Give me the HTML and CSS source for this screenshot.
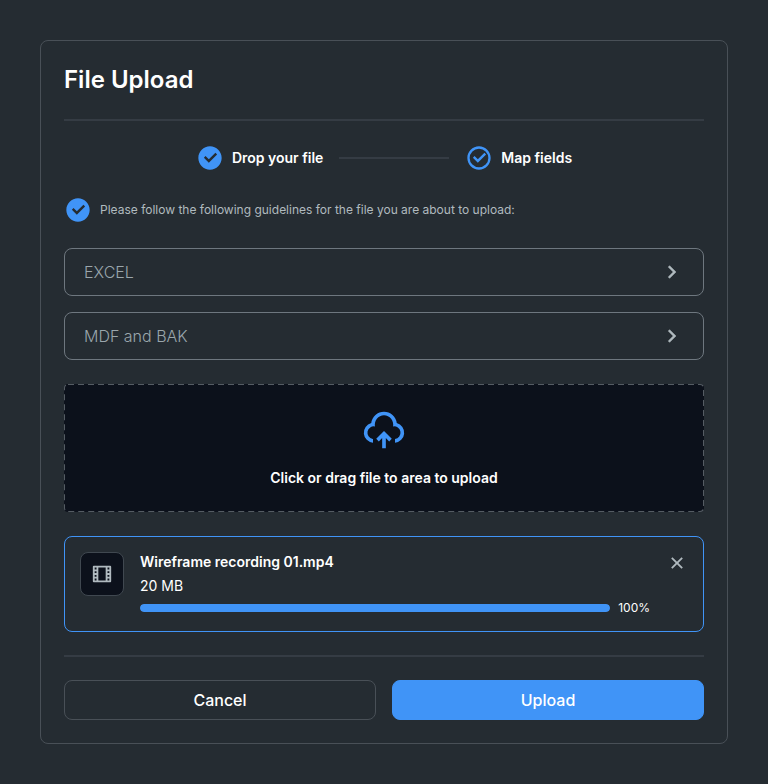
FILE: index.html
```html
<!DOCTYPE html>
<html lang="en">
<head>
<meta charset="utf-8">
<meta name="viewport" content="width=device-width, initial-scale=1">
<title>File Upload</title>
<link rel="stylesheet" href="styles.css">
</head>
<body>
<main class="card">
  <h1 class="title">File Upload</h1>
  <hr class="divider">
  <ol class="steps">
    <li class="step">
      <svg class="icon-check" viewBox="0 0 24 24" aria-hidden="true"><path d="M12 22C6.477 22 2 17.523 2 12S6.477 2 12 2s10 4.477 10 10-4.477 10-10 10zm-.997-6l7.07-7.071-1.414-1.414-5.656 5.657-2.829-2.829-1.414 1.414L11.003 16z"/></svg>
      <span>Drop your file</span>
    </li>
    <li class="step-line" aria-hidden="true"></li>
    <li class="step">
      <svg class="icon-check" viewBox="0 0 24 24" aria-hidden="true"><path d="M12 22C6.477 22 2 17.523 2 12S6.477 2 12 2s10 4.477 10 10-4.477 10-10 10zm0-2a8 8 0 1 0 0-16 8 8 0 0 0 0 16zm-.997-4L6.76 11.757l1.414-1.414 2.829 2.829 5.656-5.657 1.415 1.414L11.003 16z"/></svg>
      <span>Map fields</span>
    </li>
  </ol>
  <p class="note">
    <svg class="icon-check" viewBox="0 0 24 24" aria-hidden="true"><path d="M12 22C6.477 22 2 17.523 2 12S6.477 2 12 2s10 4.477 10 10-4.477 10-10 10zm-.997-6l7.07-7.071-1.414-1.414-5.656 5.657-2.829-2.829-1.414 1.414L11.003 16z"/></svg>
    <span>Please follow the following guidelines for the file you are about to upload:</span>
  </p>
  <div class="guides">
    <button class="guide" type="button">
      <span>EXCEL</span>
      <svg class="icon-chevron" viewBox="0 0 24 24" aria-hidden="true"><path d="M13.172 12l-4.95-4.95 1.414-1.414L16 12l-6.364 6.364-1.414-1.414z"/></svg>
    </button>
    <button class="guide" type="button">
      <span>MDF and BAK</span>
      <svg class="icon-chevron" viewBox="0 0 24 24" aria-hidden="true"><path d="M13.172 12l-4.95-4.95 1.414-1.414L16 12l-6.364 6.364-1.414-1.414z"/></svg>
    </button>
  </div>
  <label class="dropzone" for="file">
    <svg class="dropzone-outline" aria-hidden="true"><rect width="100%" height="100%" rx="4"/></svg>
    <svg class="icon-cloud" viewBox="0 0 24 24" aria-hidden="true"><path d="M12 12.586l4.243 4.242-1.415 1.415L13 16.415V22h-2v-5.587l-1.828 1.83-1.415-1.415L12 12.586zM12 2a7.001 7.001 0 0 1 6.954 6.194 5.5 5.5 0 0 1-.953 10.784v-2.014a3.5 3.5 0 1 0-1.112-6.91 5 5 0 1 0-9.777 0 3.5 3.5 0 0 0-1.292 6.88l.18.03v2.014a5.5 5.5 0 0 1-.954-10.784A7 7 0 0 1 12 2z"/></svg>
    <span>Click or drag file to area to upload</span>
    <input class="file-input" id="file" type="file">
  </label>
  <section class="file">
    <span class="file-thumb">
      <svg class="icon-small" viewBox="0 0 24 24" aria-hidden="true"><path d="M2 3.993A1 1 0 0 1 2.992 3h18.016c.548 0 .992.445.992.993v16.014a1 1 0 0 1-.992.993H2.992A.993.993 0 0 1 2 20.007V3.993zM8 5v14h8V5H8zM4 5v2h2V5H4zm14 0v2h2V5h-2zM4 9v2h2V9H4zm14 0v2h2V9h-2zM4 13v2h2v-2H4zm14 0v2h2v-2h-2zM4 17v2h2v-2H4zm14 0v2h2v-2h-2z"/></svg>
    </span>
    <div class="file-info">
      <h2 class="file-name">Wireframe recording 01.mp4</h2>
      <p class="file-size">20 MB</p>
      <div class="file-progress">
        <progress class="bar" id="progress" max="100" value="100"></progress>
        <label class="percent" for="progress">100%</label>
      </div>
    </div>
    <button class="close" type="button" aria-label="Remove file">
      <svg class="icon-small" viewBox="0 0 24 24" aria-hidden="true"><path d="M12 10.586l4.95-4.95 1.414 1.414-4.95 4.95 4.95 4.95-1.414 1.414-4.95-4.95-4.95 4.95-1.414-1.414 4.95-4.95-4.95-4.95L7.05 5.636z"/></svg>
    </button>
  </section>
  <hr class="divider">
  <div class="actions">
    <button class="btn" type="button">Cancel</button>
    <button class="btn btn-primary" type="button">Upload</button>
  </div>
</main>
</body>
</html>
```
FILE: styles.css
```css
* {
  box-sizing: border-box;
}

body {
  margin: 0;
  padding: 40px;
  background: #252c32;
  color: #fff;
  font: 14px/20px Inter, "Liberation Sans", sans-serif;
}

h1, h2, p, ol {
  margin: 0;
  padding: 0;
}

button {
  font: inherit;
  color: inherit;
  background: none;
  cursor: pointer;
}

svg {
  display: block;
  flex: none;
  fill: currentColor;
}

.card {
  display: flex;
  flex-direction: column;
  gap: 24px;
  padding: 23px;
  border: 1px solid #495057;
  border-radius: 8px;
}

.title {
  font-size: 24px;
  line-height: 32px;
  font-weight: 600;
}

.divider {
  width: 100%;
  height: 2px;
  margin: -1px 0;
  border: 0;
  background: #353c44;
}

.steps {
  display: flex;
  align-items: center;
  justify-content: center;
  gap: 16px;
  list-style: none;
  font-weight: 600;
}

.step {
  display: flex;
  align-items: center;
  gap: 8px;
}

.step-line {
  flex: 0 1 110px;
  height: 2px;
  background: #353c44;
}

.icon-check {
  width: 28px;
  height: 28px;
  color: #4094f7;
}

.note {
  display: flex;
  align-items: center;
  gap: 8px;
  font-size: 12px;
  color: #b0babf;
}

.guides {
  display: flex;
  flex-direction: column;
  gap: 16px;
}

.guide {
  display: flex;
  align-items: center;
  justify-content: space-between;
  padding: 11px 19px;
  border: 1px solid #6e777f;
  border-radius: 8px;
  font-size: 16px;
  line-height: 24px;
  font-weight: 300;
  color: #9aa6ac;
}

.icon-chevron {
  width: 24px;
  height: 24px;
  color: #b0babf;
  stroke: currentColor;
  stroke-width: 0.5;
  stroke-linejoin: round;
}

.dropzone {
  position: relative;
  display: flex;
  flex-direction: column;
  align-items: center;
  gap: 16px;
  padding: 24px;
  border-radius: 4px;
  background: #0c111b;
  font-weight: 600;
  cursor: pointer;
}

.dropzone-outline {
  position: absolute;
  inset: 0;
  width: 100%;
  height: 100%;
  border-radius: 4px;
  fill: none;
  stroke: #555c63;
  stroke-width: 2;
  stroke-dasharray: 6 4;
}

.icon-cloud {
  width: 44px;
  height: 44px;
  color: #4094f7;
}

.file-input {
  position: absolute;
  inset: 0;
  width: 100%;
  height: 100%;
  opacity: 0;
  cursor: pointer;
}

.file {
  display: flex;
  align-items: flex-start;
  gap: 16px;
  padding: 15px;
  border: 1px solid #4094f7;
  border-radius: 8px;
}

.file-thumb {
  display: grid;
  place-items: center;
  width: 44px;
  height: 44px;
  border: 1px solid #404850;
  border-radius: 8px;
  background: #0c111b;
  color: #b0babf;
}

.icon-small {
  width: 22px;
  height: 22px;
}

.file-info {
  display: flex;
  flex: 1;
  flex-direction: column;
  gap: 4px;
  min-width: 0;
}

.file-name {
  font-size: 14px;
  font-weight: 600;
}

.file-progress {
  display: flex;
  align-items: center;
  gap: 8px;
}

.bar {
  flex: 1;
  min-width: 0;
  height: 8px;
  border: 0;
  border-radius: 4px;
  overflow: hidden;
  background: #353c44;
  appearance: none;
}

.bar::-webkit-progress-bar {
  background: #353c44;
}

.bar::-webkit-progress-value {
  background: #4094f7;
  border-radius: 4px;
}

.percent {
  font-size: 12px;
  line-height: 16px;
}

.close {
  padding: 0;
  border: 0;
  color: #b0babf;
}

.actions {
  display: grid;
  grid-template-columns: 1fr 1fr;
  gap: 16px;
}

.btn {
  padding: 7px;
  border: 1px solid #495057;
  border-radius: 8px;
  font-size: 16px;
  line-height: 24px;
  font-weight: 500;
}

.btn-primary {
  border-color: #4094f7;
  background: #4094f7;
}
```
